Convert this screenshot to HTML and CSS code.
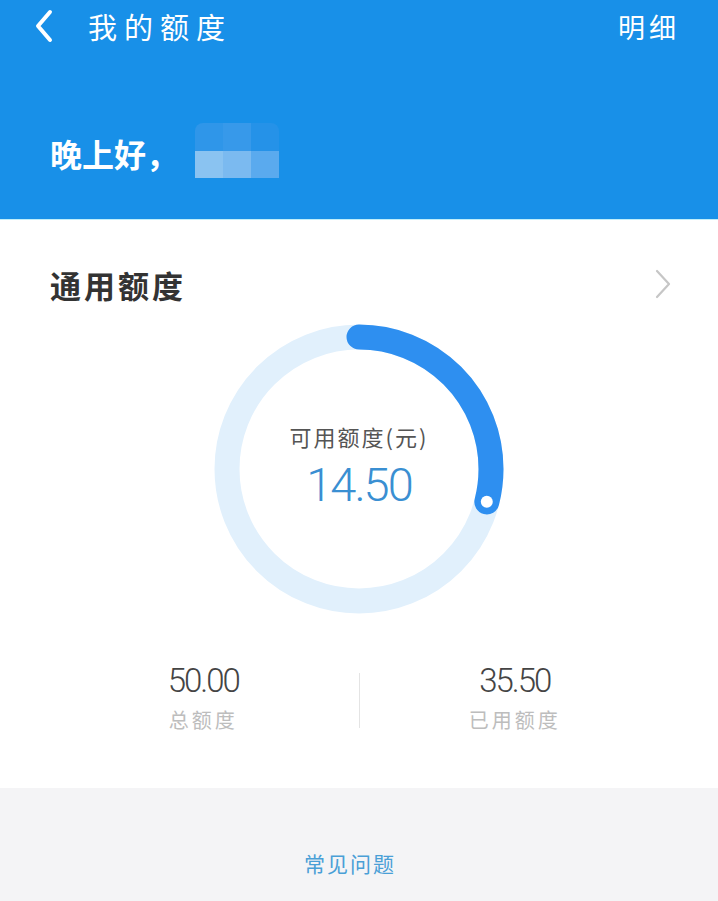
FILE: index.html
```html
<!DOCTYPE html>
<html lang="zh">
<head>
    <meta charset="UTF-8">
    <meta name="viewport" content="width=device-width, initial-scale=1.0">
    <title>我的额度</title>
    <link rel="stylesheet" href="styles.css">
</head>
<body>
    <!-- 顶部 -->
    <div class="header">
        <div class="nav">
            <svg class="back" width="22" height="34" viewBox="0 0 22 34">
                <polyline points="17,3 5,17 17,31" fill="none" stroke="#fff" stroke-width="4" stroke-linecap="round" stroke-linejoin="round"/>
            </svg>
            <span class="nav-title">我的额度</span>
            <span class="nav-right">明细</span>
        </div>
        <div class="greeting">
            <span>晚上好，</span>
            <div class="mosaic">
                <i class="m1"></i><i class="m2"></i><i class="m3"></i>
                <i class="m4"></i><i class="m5"></i><i class="m6"></i>
            </div>
        </div>
    </div>

    <!-- 额度 -->
    <div class="card">
        <div class="card-head">
            <span class="card-title">通用额度</span>
            <svg width="18" height="30" viewBox="0 0 18 30">
                <polyline points="3,2 15,15 3,28" fill="none" stroke="#c6c6c6" stroke-width="2.2" stroke-linecap="round" stroke-linejoin="round"/>
            </svg>
        </div>

        <div class="ring">
            <svg width="300" height="300" viewBox="0 0 300 300">
                <circle cx="150" cy="150" r="132" fill="none" stroke="#e1f0fc" stroke-width="25"/>
                <circle cx="150" cy="150" r="132" fill="none" stroke="#2e8ff0" stroke-width="25"
                        stroke-linecap="round" stroke-dasharray="240.5 829.4" transform="rotate(-90 150 150)"/>
                <circle cx="277.8" cy="182.8" r="6" fill="#fff"/>
            </svg>
            <div class="ring-text">
                <div class="ring-label">可用额度(元)</div>
                <div class="ring-value">14.50</div>
            </div>
        </div>

        <div class="stats">
            <div class="stat">
                <div class="stat-num">50.00</div>
                <div class="stat-label">总额度</div>
            </div>
            <div class="divider"></div>
            <div class="stat">
                <div class="stat-num">35.50</div>
                <div class="stat-label">已用额度</div>
            </div>
        </div>
    </div>

    <div class="footer">
        <span class="faq">常见问题</span>
    </div>
</body>
</html>
```

FILE: styles.css
```css
body {
    margin: 0;
    font-family: "Noto Sans CJK SC", "Liberation Sans", sans-serif;
    background-color: #f4f4f6;
}
.header {
    height: 219px;
    background-color: #1890e8;
    border-bottom: 1px solid #bfeefa;
    color: #fff;
}
.nav {
    display: flex;
    align-items: center;
    height: 52px;
    padding: 0 38px 0 33px;
}
.back {
    margin-right: 33px;
}
.nav-title {
    font-size: 29px;
    letter-spacing: 7px;
    flex: 1;
}
.nav-right {
    font-size: 27px;
    letter-spacing: 4px;
}
.greeting {
    display: flex;
    align-items: center;
    padding: 71px 0 0 50px;
    font-size: 32px;
    font-weight: bold;
}
.greeting span {
    margin-top: 4px;
}
.mosaic {
    display: grid;
    grid-template-columns: repeat(3, 28px);
    grid-template-rows: 28px 27px;
    margin-left: 17px;
    border-radius: 8px 8px 0 0;
    overflow: hidden;
}
.m1 { background-color: #2f96e9; }
.m2 { background-color: #3799ea; }
.m3 { background-color: #2592e8; }
.m4 { background-color: #8ac3f1; }
.m5 { background-color: #7bbaf0; }
.m6 { background-color: #5aaaee; }
.card {
    background-color: #fff;
    height: 568px;
    box-sizing: border-box;
    padding-top: 42px;
}
.card-head {
    display: flex;
    justify-content: space-between;
    align-items: center;
    padding: 0 46px 0 50px;
    height: 44px;
}
.card-title {
    font-size: 31px;
    font-weight: bold;
    color: #333;
    letter-spacing: 3px;
}
.ring {
    display: grid;
    justify-content: center;
    margin-top: 13px;
}
.ring svg,
.ring-text {
    grid-area: 1 / 1;
}
.ring-text {
    text-align: center;
    padding-top: 100px;
}
.ring-label {
    font-size: 22px;
    color: #555;
    letter-spacing: 2px;
    line-height: 34px;
}
.ring-value {
    font-family: Roboto, "Liberation Sans", sans-serif;
    font-weight: 300;
    font-size: 47px;
    letter-spacing: -2px;
    color: #3a8fd2;
    line-height: 64px;
}
.stats {
    display: flex;
    align-items: center;
    padding: 0 48px;
    margin-top: 42px;
}
.stat {
    flex: 1;
    text-align: center;
}
.stat-num {
    font-family: Roboto, "Liberation Sans", sans-serif;
    font-weight: 300;
    font-size: 33px;
    letter-spacing: -2px;
    color: #444;
    line-height: 40px;
}
.stat-label {
    font-size: 20px;
    letter-spacing: 3px;
    color: #bdbdbd;
    line-height: 38px;
}
.divider {
    width: 1px;
    height: 55px;
    background-color: #e4e4e4;
}
.footer {
    text-align: center;
    padding: 60px 18px 0 0;
}
.faq {
    font-size: 21px;
    letter-spacing: 2px;
    color: #4a9fd6;
}
```
